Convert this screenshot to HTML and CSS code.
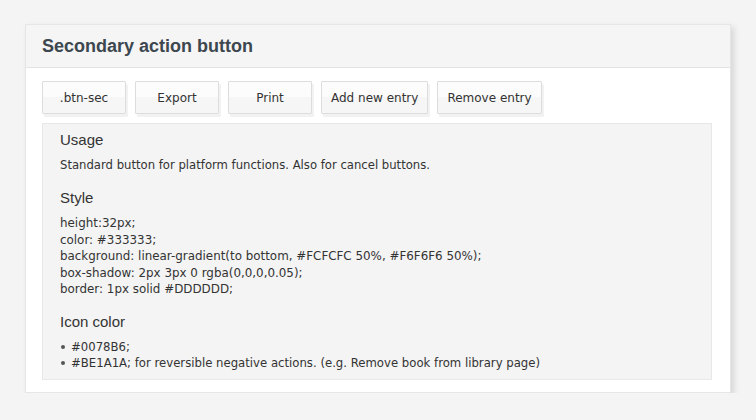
FILE: index.html
```html
<!DOCTYPE html>
<html>
<head>
<meta charset="utf-8">
<link rel="stylesheet" href="styles.css">
</head>
<body>
<div class="card">
  <div class="card-header"><h1 class="title">Secondary action button</h1></div>
  <div class="card-body">
    <div class="btn-row">
      <button class="btn">.btn-sec</button>
      <button class="btn">Export</button>
      <button class="btn">Print</button>
      <button class="btn">Add new entry</button>
      <button class="btn">Remove entry</button>
    </div>
    <div class="info">
      <h2 class="h">Usage</h2>
      <p class="txt">Standard button for platform functions. Also for cancel buttons.</p>
      <h2 class="h h-gap">Style</h2>
      <p class="txt code">height:32px;<br>color: #333333;<br>background: linear-gradient(to bottom, #FCFCFC 50%, #F6F6F6 50%);<br>box-shadow: 2px 3px 0 rgba(0,0,0,0.05);<br>border: 1px solid #DDDDDD;</p>
      <h2 class="h h-gap2">Icon color</h2>
      <ul class="list">
        <li>#0078B6;</li>
        <li>#BE1A1A; for reversible negative actions. (e.g. Remove book from library page)</li>
      </ul>
    </div>
  </div>
</div>
</body>
</html>
```
FILE: styles.css
```css
html, body { margin: 0; padding: 0; }
body {
  background: #f4f4f4;
  padding: 24px 0 0 25px;
  font-family: "DejaVu Sans", Verdana, sans-serif;
  color: #333;
}
.card {
  width: 706px;
  box-sizing: border-box;
  background: #fff;
  border: 1px solid #e6e6e6;
  box-shadow: 3px 3px 6px rgba(0,0,0,0.12);
}
.card-header {
  height: 42px;
  background: #f5f5f5;
  border-bottom: 1px solid #e3e3e3;
  padding: 0 16px;
  display: flex;
  align-items: center;
}
.title {
  margin: 0;
  font-family: "Liberation Sans", Arial, sans-serif;
  font-size: 18px;
  font-weight: bold;
  color: #3d474f;
}
.card-body {
  padding: 13px 18px 12px 16px;
}
.btn-row {
  display: flex;
  gap: 9px;
}
.btn {
  height: 33px;
  min-width: 84px;
  padding: 0 9px;
  box-sizing: border-box;
  border: 1px solid #ddd;
  border-radius: 1px;
  background: linear-gradient(to bottom, #fcfcfc 50%, #f6f6f6 50%);
  box-shadow: 2px 3px 0 rgba(0,0,0,0.05);
  font-family: "DejaVu Sans", Verdana, sans-serif;
  font-size: 12px;
  color: #333;
}
.info {
  margin-top: 9px;
  background: #f4f4f4;
  border: 1px solid #e8e8e8;
  padding: 6px 17px 8px;
}
.h {
  margin: 0;
  font-family: "Liberation Sans", Arial, sans-serif;
  font-size: 15px;
  font-weight: normal;
  line-height: 20px;
  color: #333;
}
.h-gap { margin-top: 14px; }
.h-gap2 { margin-top: 14px; }
.txt {
  margin: 7px 0 0;
  font-size: 11.65px;
  line-height: 17px;
  color: #333;
}
.code { margin-top: 7px; font-size: 11.9px; line-height: 16.6px; }
.list {
  margin: 7px 0 0;
  padding: 0;
  list-style: none;
  font-size: 11.7px;
  line-height: 16px;
}
.list li {
  display: flex;
  align-items: center;
}
.list li::before {
  content: "";
  width: 4px;
  height: 4px;
  border-radius: 50%;
  background: #555;
  margin: 0 6px 0 1px;
}
```
